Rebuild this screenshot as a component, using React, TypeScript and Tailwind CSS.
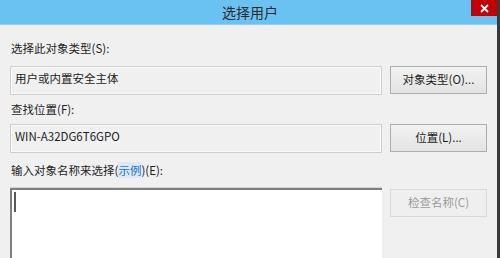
import React from 'react'

const font = { fontFamily: '"Noto Sans CJK SC", "Noto Sans", sans-serif' }

function Button({ children, disabled }: { children: React.ReactNode; disabled?: boolean }) {
  return (
    <button
      className={`w-[97px] h-[28px] shrink-0 flex items-center justify-center text-[11.5px] border ${
        disabled
          ? 'border-[#d9d9d9] bg-[#efefef] text-[#9a9a9a]'
          : 'border-[#adadad] bg-gradient-to-b from-[#f2f2f2] to-[#e3e3e3] text-[#1e1e1e]'
      }`}
    >
      {children}
    </button>
  )
}

function ReadonlyField({ value }: { value: string }) {
  return (
    <div className="w-[372px] h-[29px] shrink-0 border border-[#cfcfcf] bg-[#f0f0f0] shadow-[inset_0_0_0_1px_#fafafa] pl-[4px] pt-[4px] text-[11.5px] text-[#1e1e1e] leading-[14px]">
      {value}
    </div>
  )
}

export default function App() {
  return (
    <div className="w-full h-screen overflow-hidden bg-[#f0f0f0] flex">
      <div className="flex-1 min-w-0 flex flex-col" style={font}>
        {/* title bar */}
        <div className="h-[25px] shrink-0 bg-[#69c2f1] border-b border-[#8fd1f5] flex items-start">
          <div className="flex-1 h-full flex items-center justify-center pl-[29px]">
            <span className="text-[14px] text-[#2b2b2b] leading-none mt-[-1px]">选择用户</span>
          </div>
          <div className="w-[26px] h-[16px] bg-red-700 flex items-center justify-center">
            <svg width="9" height="9" viewBox="0 0 9 9">
              <path d="M1 1L8 8M8 1L1 8" stroke="#ffffff" strokeWidth="1.8" />
            </svg>
          </div>
        </div>

        <div className="flex-1 min-h-0 px-[10px]">
          <div className="text-[11.5px] text-[#1e1e1e] leading-[14px] mt-[16px] pl-[1px]">选择此对象类型(S):</div>
          <div className="flex gap-[8px] mt-[11px]">
            <ReadonlyField value="用户或内置安全主体" />
            <Button>对象类型(O)...</Button>
          </div>

          <div className="text-[11.5px] text-[#1e1e1e] leading-[14px] mt-[7px] pl-[1px]">查找位置(F):</div>
          <div className="flex gap-[8px] mt-[8px]">
            <ReadonlyField value="WIN-A32DG6T6GPO" />
            <Button>位置(L)...</Button>
          </div>

          <div className="text-[11.5px] text-[#1e1e1e] leading-[14px] mt-[10px] pl-[1px]">
            输入对象名称来选择(<span className="text-[#1a6fc9] bg-[#dbe9f7]">示例</span>)(E):
          </div>
          <div className="flex gap-[8px] mt-[11px]">
            <div className="w-[372px] h-[80px] shrink-0 bg-white border-t-2 border-l-2 border-[#7f7f7f] shadow-[0_-1px_0_#d4d4d4] relative">
              <div className="absolute left-[2px] top-[2px] w-[2px] h-[20px] bg-[#5a5a5a]" />
            </div>
            <div className="mt-[1px]">
              <Button disabled>检查名称(C)</Button>
            </div>
          </div>
        </div>
      </div>
      <div className="w-[3px] h-full shrink-0 bg-[#3a3a3a]" />
    </div>
  )
}
